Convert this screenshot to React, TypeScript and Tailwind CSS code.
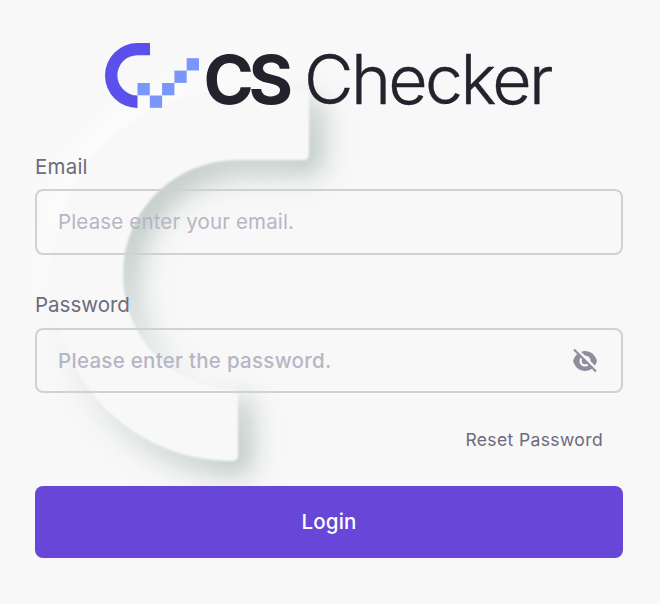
import React from "react";

function Watermark() {
  const shape =
    "M237 90H303Q309 90 309 96V154Q309 160 303 160H238C174 160 123 211 123 275C123 338 174 389 233 389Q238 389 238 395V455Q238 461 232 461C132 461 51 378 51 275C51 173 134 90 237 90Z";
  return (
    <svg className="pointer-events-none absolute inset-0" width="660" height="604" viewBox="0 0 660 604" aria-hidden="true">
      <defs>
        <filter id="soft" x="-40%" y="-40%" width="180%" height="180%" colorInterpolationFilters="sRGB">
          <feGaussianBlur stdDeviation="12" />
        </filter>
        <filter id="wide" x="-40%" y="-40%" width="180%" height="180%" colorInterpolationFilters="sRGB">
          <feGaussianBlur stdDeviation="22" />
        </filter>
        <filter id="edge" colorInterpolationFilters="sRGB">
          <feGaussianBlur stdDeviation="0.8" />
        </filter>
      </defs>
      <path d={shape} transform="translate(14 14)" fill="#dfe6e3" fillOpacity="0.5" filter="url(#wide)" />
      <path d={shape} transform="translate(12 12)" fill="#bac7c3" filter="url(#soft)" />
      <path d={shape} transform="translate(-14 -14)" fill="#ffffff" fillOpacity="0.7" filter="url(#wide)" />
      <path d={shape} transform="translate(-9 -10)" fill="#ffffff" fillOpacity="0.4" filter="url(#soft)" />
      <path d={shape} fill="#f8f8f8" filter="url(#edge)" />
    </svg>
  );
}

function Logo() {
  return (
    <svg className="block" width="462" height="104" viewBox="104 24 462 104" role="img" aria-label="CS Checker">
      <path d="M150 43V55.200H137.500A20.150 20.150 0 0 0 137.500 95.500V108A32.500 32.500 0 0 1 137.500 43Z" fill="#5b50ec" />
      <g fill="#7b96fa">
        <rect x="137.500" y="83" width="12.300" height="12.300" />
        <rect x="149.800" y="95.500" width="12.300" height="12.300" />
        <rect x="162.100" y="83" width="12.300" height="12.300" />
        <rect x="174.400" y="70.600" width="12.300" height="12.300" />
        <rect x="186.700" y="58.200" width="12.300" height="12.300" />
      </g>
      <g fill="#23222d" className="font-['Inter',sans-serif]">
        <text x="203.500" y="104.300" fontSize="68" className="font-bold" textLength="89.500" lengthAdjust="spacing">CS</text>
        <text x="304" y="104.300" fontSize="68" className="font-light" stroke="#23222d" strokeWidth="0.400" textLength="249.500" lengthAdjust="spacing">Checker</text>
      </g>
    </svg>
  );
}

function EyeOff() {
  return (
    <svg className="shrink-0" width="26" height="26" viewBox="0 0 26 26" aria-hidden="true">
      <path fill="#8e8d9d" d="M1 13C3 6.500 7.500 3 13 3s10 3.500 12 10c-2 6.500-6.500 10-12 10S3 19.500 1 13Z" />
      <circle cx="13" cy="13" r="5.600" fill="#f8f8f8" />
      <circle cx="13" cy="13" r="3.200" fill="#8e8d9d" />
      <path d="M3.500 0 26 22.500" stroke="#f8f8f8" strokeWidth="2.500" />
      <path d="M2 1.500 24 23.500" stroke="#8e8d9d" strokeWidth="2.200" />
    </svg>
  );
}

const field =
  "flex items-center rounded-lg border-2 border-[#d0d0d9] pl-[21px] pr-[23px]";
const input =
  "min-w-0 flex-1 bg-transparent text-[20.5px] text-[#6d6b7c] placeholder:text-[#b6b6c4] placeholder:opacity-100 outline-none";

export default function App() {
  return (
    <main className="relative h-[604px] w-[660px] overflow-hidden bg-[#f8f8f8] font-['Inter',sans-serif] text-[#6d6b7c]">
      <Watermark />
      <form className="relative flex flex-col pl-[35px] pr-[37px] pt-6">
        <div className="flex h-[104px] pl-[69px]">
          <Logo />
        </div>
        <label htmlFor="email" className="mt-6 h-[37px] text-[20.5px] leading-[30px] tracking-[0.2px]">Email</label>
        <div className={`${field} h-[66px]`}>
          <input id="email" className={`${input} tracking-[0.15px]`} placeholder="Please enter your email." />
        </div>
        <label htmlFor="password" className="mt-[35px] h-[38px] text-[20.5px] leading-[30px]">Password</label>
        <div className={`${field} h-[65px]`}>
          <input id="password" type="password" className={`${input} pt-0.5 font-medium tracking-[0.28px]`} placeholder="Please enter the password." />
          <EyeOff />
        </div>
        <a className="mr-5 mt-[35px] self-end text-[17.5px] leading-6 tracking-[0.38px]">Reset Password</a>
        <button type="button" className="mt-[34px] h-[72px] rounded-lg bg-[#6846d8] text-[20.5px] font-medium tracking-[0.15px] text-white">Login</button>
      </form>
    </main>
  );
}
